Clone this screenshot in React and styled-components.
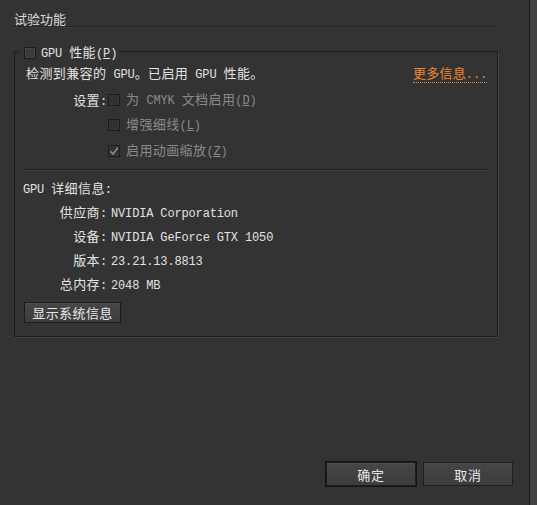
import styled, { createGlobalStyle } from "styled-components";

const GlobalStyle = createGlobalStyle`
  html, body {
    margin: 0;
    padding: 0;
    background: #333333;
  }
  body {
    font-family: "Noto Sans CJK SC", "Liberation Sans", sans-serif;
    font-size: 13px;
    letter-spacing: 0.4px;
    color: #e2e2e2;
  }
`;

const Window = styled.div`
  display: flex;
  width: 537px;
  height: 505px;
  background: #333333;
  overflow: hidden;
`;

const Main = styled.div`
  width: 529px;
  box-sizing: border-box;
  display: flex;
  flex-direction: column;
  padding: 0 16px 19px 13px;
`;

const Edge = styled.div`
  width: 8px;
  box-sizing: border-box;
  border-left: 1px solid #1b1b1b;
  background: #434343;
`;

const Header = styled.div`
  width: 486px;
  height: 27px;
  box-sizing: border-box;
  display: flex;
  align-items: flex-end;
  padding-left: 1px;
  line-height: 14px;
  letter-spacing: 0;
  color: #d8d8d8;
  border-bottom: 1px solid #242424;
  box-shadow: 0 1px 0 #3c3c3c;
`;

const Lat = styled.span`
  font-family: "Liberation Mono", monospace;
  font-size: 12px;
  letter-spacing: -0.15px;
  white-space: pre;
`;

const Key = styled.span`
  text-decoration: underline;
  text-underline-offset: 1px;
`;

const Group = styled.fieldset`
  margin: 17px 0 0 1px;
  width: 484px;
  min-width: 0;
  box-sizing: border-box;
  padding: 0 8px 13px;
  border: 1px solid #1c1c1c;
  box-shadow: 1px 1px 0 #444444;
`;

const Legend = styled.legend`
  margin-left: -4px;
  padding: 0 2px 0 5px;
  height: 14px;
`;

const CheckLabel = styled.label`
  display: inline-flex;
  align-items: center;
  gap: ${p => p.$gap || 5}px;
  height: 14px;
  line-height: 14px;
  color: ${p => (p.$disabled ? "#8a8a8a" : "#e2e2e2")};
`;

const Box = styled.span`
  width: 12px;
  height: 12px;
  flex: none;
  box-sizing: border-box;
  display: flex;
  align-items: center;
  justify-content: center;
  border: 1px solid #1c1c1c;
  background: ${p => (p.$disabled ? "#313131" : "#3b3b3b")};
  box-shadow: inset 0 0 0 1px ${p => (p.$disabled ? "#373737" : "#444444")};
`;

const InfoRow = styled.div`
  display: flex;
  justify-content: space-between;
  align-items: center;
  height: 20px;
  margin-top: 6px;
  padding: 0 2px 0 3px;
  line-height: 14px;
`;

const MoreLink = styled.a`
  color: #f0882a;
  text-decoration: none;
  border-bottom: 1px dotted #f0882a;
  line-height: 13px;
  letter-spacing: 0.2px;
  cursor: pointer;
`;

const Rows = styled.div`
  margin-top: ${p => p.$top || 0}px;
`;

const Row = styled.div`
  display: flex;
  align-items: center;
  height: ${p => p.$h}px;
`;

const Label = styled.div`
  width: 84px;
  flex: none;
  text-align: right;
  line-height: 14px;
`;

const Setting = styled.div`
  margin-left: 1px;
`;

const Value = styled.div`
  margin-left: 4px;
  line-height: 14px;
`;

const Rule = styled.div`
  height: 1px;
  margin-top: 6px;
  background: #222222;
  box-shadow: 0 1px 0 #3e3e3e;
`;

const Heading = styled.div`
  margin-top: 8px;
  height: 20px;
  line-height: 20px;
`;

const SmallButton = styled.button`
  margin: 5px 0 0 1px;
  width: 97px;
  height: 21px;
  box-sizing: border-box;
  padding: 0;
  font: inherit;
  letter-spacing: inherit;
  line-height: 14px;
  color: #e8e8e8;
  border: 1px solid #1c1c1c;
  background: linear-gradient(#474747, #3c3c3c);
  box-shadow: inset 0 1px 0 #4d4d4d;
`;

const Footer = styled.div`
  margin-top: auto;
  display: flex;
  justify-content: flex-end;
  gap: 7px;
`;

const DialogButton = styled.button`
  width: 90px;
  height: 24px;
  box-sizing: border-box;
  padding: 0;
  font: inherit;
  letter-spacing: 0.8px;
  color: #e8e8e8;
  border: 1px solid #1e1e1e;
  background: linear-gradient(#464646, #3c3c3c);
  box-shadow: ${p =>
    p.$primary ? "0 0 0 1px #141414, inset 0 1px 0 #4c4c4c" : "inset 0 1px 0 #4c4c4c"};
`;

function Check({ checked, disabled }) {
  return (
    <Box $disabled={disabled}>
      {checked && (
        <svg width="10" height="10" viewBox="0 0 10 10">
          <path d="M1.5 5.2 L4 8 L8.8 1.8" fill="none" stroke="#8c8c8c" strokeWidth="1.7" />
        </svg>
      )}
    </Box>
  );
}

const details = [
  ["供应商", "NVIDIA Corporation"],
  ["设备", "NVIDIA GeForce GTX 1050"],
  ["版本", "23.21.13.8813"],
  ["总内存", "2048 MB"],
];

export default function App() {
  return (
    <>
      <GlobalStyle />
      <Window>
        <Main>
          <Header>试验功能</Header>

          <Group>
            <Legend>
              <CheckLabel $gap={5}>
                <Check />
                <span>
                  <Lat>GPU </Lat>性能<Lat>(<Key>P</Key>)</Lat>
                </span>
              </CheckLabel>
            </Legend>

            <InfoRow>
              <span>
                检测到兼容的<Lat> GPU</Lat>。已启用<Lat> GPU </Lat>性能。
              </span>
              <MoreLink>
                更多信息<Lat>...</Lat>
              </MoreLink>
            </InfoRow>

            <Rows $top={4}>
              <Row $h={25}>
                <Label>
                  设置<Lat>:</Lat>
                </Label>
                <Setting>
                  <CheckLabel $disabled $gap={6}>
                    <Check disabled />
                    <span>
                      为<Lat> CMYK </Lat>文档启用<Lat>(<Key>D</Key>)</Lat>
                    </span>
                  </CheckLabel>
                </Setting>
              </Row>
              <Row $h={25}>
                <Label />
                <Setting>
                  <CheckLabel $disabled $gap={6}>
                    <Check disabled />
                    <span>
                      增强细线<Lat>(<Key>L</Key>)</Lat>
                    </span>
                  </CheckLabel>
                </Setting>
              </Row>
              <Row $h={25}>
                <Label />
                <Setting>
                  <CheckLabel $disabled $gap={6}>
                    <Check disabled checked />
                    <span>
                      启用动画缩放<Lat>(<Key>Z</Key>)</Lat>
                    </span>
                  </CheckLabel>
                </Setting>
              </Row>
            </Rows>

            <Rule />

            <Heading>
              <Lat>GPU </Lat>详细信息<Lat>:</Lat>
            </Heading>

            <Rows $top={3}>
              {details.map(([name, value]) => (
                <Row $h={24} key={name}>
                  <Label>
                    {name}
                    <Lat>:</Lat>
                  </Label>
                  <Value>
                    <Lat>{value}</Lat>
                  </Value>
                </Row>
              ))}
            </Rows>

            <SmallButton>显示系统信息</SmallButton>
          </Group>

          <Footer>
            <DialogButton $primary>确定</DialogButton>
            <DialogButton>取消</DialogButton>
          </Footer>
        </Main>
        <Edge />
      </Window>
    </>
  );
}
